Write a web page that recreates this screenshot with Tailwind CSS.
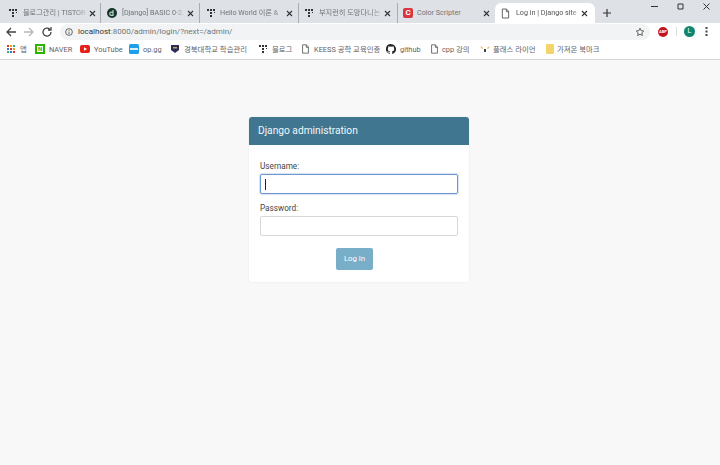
<!DOCTYPE html>
<html>
<head>
    <title>Log in | Django site admin</title>
    <meta charset="utf-8">
    <script src="https://cdn.jsdelivr.net/npm/@tailwindcss/browser@4"></script>
</head>
<body class="h-[465px] w-[720px] overflow-hidden flex flex-col bg-[#f8f8f8] font-['Roboto','Noto_Sans_CJK_KR',sans-serif]">
    <!-- tab strip -->
    <div class="h-[23px] bg-[#dee1e6] flex items-end pl-[4px] relative text-[7.2px] text-[#70757a] shrink-0">
        <div class="w-[97px] h-[20px] flex items-center pl-[4px] pr-[4px] border-r border-[#a9adb3]">
            <svg class="w-[10px] h-[10px] shrink-0" viewBox="0 0 10 10"><path fill="#333" d="M1 1h2v2H1zM4 1h2v2H4zM7 1h2v2H7zM4 4h2v2H4zM4 7h2v2H4zM8 4h1v1H8z"/></svg>
            <span class="ml-[5px] flex-1 whitespace-nowrap [mask-image:linear-gradient(to_right,#000_80%,transparent)]">블로그관리 | TISTOR</span>
            <svg class="w-[7px] h-[7px] shrink-0" viewBox="0 0 7 7"><path stroke="#333" stroke-width="1.1" d="M1 1l5 5M6 1L1 6"/></svg>
        </div>
        <div class="w-[99px] h-[20px] flex items-center pl-[6px] pr-[5px] border-r border-[#a9adb3]">
            <svg class="w-[10px] h-[10px] shrink-0" viewBox="0 0 10 10"><circle cx="5" cy="5" r="5" fill="#17352a"/><path fill="none" stroke="#b9d8c8" stroke-width="1.2" d="M6 2v5.4H4.4a1.6 1.6 0 0 1 0-3.2H6"/></svg>
            <span class="ml-[5px] flex-1 whitespace-nowrap [mask-image:linear-gradient(to_right,#000_80%,transparent)]">[Django] BASIC 0-2.</span>
            <svg class="w-[7px] h-[7px] shrink-0" viewBox="0 0 7 7"><path stroke="#333" stroke-width="1.1" d="M1 1l5 5M6 1L1 6"/></svg>
        </div>
        <div class="w-[99px] h-[20px] flex items-center pl-[6px] pr-[5px] border-r border-[#a9adb3]">
            <svg class="w-[10px] h-[10px] shrink-0" viewBox="0 0 10 10"><path fill="#333" d="M1 1h2v2H1zM4 1h2v2H4zM7 1h2v2H7zM4 4h2v2H4zM4 7h2v2H4zM8 4h1v1H8z"/></svg>
            <span class="ml-[4px] flex-1 whitespace-nowrap [mask-image:linear-gradient(to_right,#000_80%,transparent)]">Hello World 이론 &amp;</span>
            <svg class="w-[7px] h-[7px] shrink-0" viewBox="0 0 7 7"><path stroke="#333" stroke-width="1.1" d="M1 1l5 5M6 1L1 6"/></svg>
        </div>
        <div class="w-[99px] h-[20px] flex items-center pl-[5px] pr-[6px] border-r border-[#a9adb3]">
            <svg class="w-[10px] h-[10px] shrink-0" viewBox="0 0 10 10"><path fill="#333" d="M1 1h2v2H1zM4 1h2v2H4zM7 1h2v2H7zM4 4h2v2H4zM4 7h2v2H4zM8 4h1v1H8z"/></svg>
            <span class="ml-[5px] flex-1 whitespace-nowrap [mask-image:linear-gradient(to_right,#000_80%,transparent)]">부지런히 도망다니는</span>
            <svg class="w-[7px] h-[7px] shrink-0" viewBox="0 0 7 7"><path stroke="#333" stroke-width="1.1" d="M1 1l5 5M6 1L1 6"/></svg>
        </div>
        <div class="w-[97px] h-[20px] flex items-center pl-[5px] pr-[5px]">
            <span class="w-[10px] h-[10px] rounded-[2px] bg-[#d9363e] text-white text-[8px] leading-[10px] text-center font-bold shrink-0">C</span>
            <span class="ml-[4px] flex-1 whitespace-nowrap">Color Scripter</span>
            <svg class="w-[7px] h-[7px] shrink-0" viewBox="0 0 7 7"><path stroke="#333" stroke-width="1.1" d="M1 1l5 5M6 1L1 6"/></svg>
        </div>
        <div class="w-[100px] h-[20px] flex items-center pl-[6px] pr-[7px] bg-white rounded-t-[6px] text-[#555]">
            <svg class="w-[9px] h-[11px] shrink-0" viewBox="0 0 10 12" fill="none" stroke="#555"><path d="M1.5 1h4.5l2.5 2.5V11h-7zM6 1v3h2.5"/></svg>
            <span class="ml-[6px] flex-1 whitespace-nowrap [mask-image:linear-gradient(to_right,#000_85%,transparent)]">Log in | Django site</span>
            <svg class="w-[7px] h-[7px] shrink-0" viewBox="0 0 7 7"><path stroke="#333" stroke-width="1.1" d="M1 1l5 5M6 1L1 6"/></svg>
        </div>
        <svg class="ml-[8px] mb-[6px] w-[8px] h-[8px]" viewBox="0 0 8 8"><path stroke="#333" stroke-width="1.2" d="M4 0v8M0 4h8"/></svg>
        <!-- window buttons -->
        <div class="absolute right-[10px] top-[3px] flex gap-[19px]">
            <svg class="w-[7px] h-[7px]" viewBox="0 0 7 7"><path stroke="#333" d="M0 3.5h7"/></svg>
            <svg class="w-[7px] h-[7px]" viewBox="0 0 7 7" fill="none"><path stroke="#333" d="M1 1h5v5H1z"/></svg>
            <svg class="w-[7px] h-[7px]" viewBox="0 0 7 7"><path stroke="#333" d="M.5.5l6 6M6.5.5l-6 6"/></svg>
        </div>
    </div>
    <!-- toolbar -->
    <div class="h-[17px] bg-white flex items-center shrink-0">
        <svg class="ml-[5px] w-[12px] h-[12px]" viewBox="0 0 12 12" fill="none" stroke="#444" stroke-width="1.3"><path d="M11 6H2M6 2L2 6l4 4"/></svg>
        <svg class="ml-[6px] w-[12px] h-[12px]" viewBox="0 0 12 12" fill="none" stroke="#b5b7ba" stroke-width="1.3"><path d="M1 6h9M6 2l4 4-4 4"/></svg>
        <svg class="ml-[6px] w-[12px] h-[12px]" viewBox="0 0 12 12" fill="none" stroke="#444" stroke-width="1.3"><path d="M10 6a4 4 0 1 1-1.2-2.8M10 1v3H7"/></svg>
        <div class="ml-[7px] w-[590px] h-[16px] mt-[1px] rounded-full bg-[#f1f3f4] flex items-center pl-[5px] pr-[5px] text-[8px]">
            <svg class="w-[8px] h-[8px] shrink-0" viewBox="0 0 10 10" fill="none" stroke="#444"><circle cx="5" cy="5" r="4.2"/><path d="M5 4.5v3M5 2.5v1"/></svg>
            <span class="ml-[5px] text-[#333]">localhost</span><span class="text-[#70757a]">:8000/admin/login/?next=/admin/</span>
            <svg class="ml-auto w-[10px] h-[10px]" viewBox="0 0 24 24" fill="none" stroke="#444" stroke-width="2"><path d="M12 3l2.8 5.8 6.2.9-4.5 4.4 1.1 6.3-5.6-3-5.6 3 1.1-6.3L3 9.7l6.2-.9z"/></svg>
        </div>
        <span class="ml-[8px] w-[10px] h-[10px] rounded-full bg-[#c4131c] text-white text-[4px] leading-[10px] text-center font-bold">ABP</span>
        <span class="ml-[8px] w-px h-[9px] bg-[#dadce0]"></span>
        <span class="ml-[7px] w-[11px] h-[11px] rounded-full bg-[#0f8571] text-white text-[7px] leading-[11px] text-center">L</span>
        <svg class="ml-[10px] w-[3px] h-[9px]" viewBox="0 0 3 9"><path fill="#444" d="M.5 0h2v2h-2zM.5 3.5h2v2h-2zM.5 7h2v2h-2z"/></svg>
    </div>
    <!-- bookmarks -->
    <div class="h-[20px] bg-white border-b border-[#d2d4d7] flex items-center pl-[7px] text-[7.4px] text-[#5f6368] whitespace-nowrap shrink-0">
        <div class="w-[28px] flex items-center">
            <svg class="w-[8px] h-[8px] shrink-0" viewBox="0 0 8 8"><path fill="#d33" d="M0 0h2v2H0z"/><path fill="#e8a010" d="M3 0h2v2H3z"/><path fill="#3a7" d="M6 0h2v2H6z"/><path fill="#37c" d="M0 3h2v2H0z"/><path fill="#d33" d="M3 3h2v2H3z"/><path fill="#e8a010" d="M6 3h2v2H6z"/><path fill="#3a7" d="M0 6h2v2H0z"/><path fill="#37c" d="M3 6h2v2H3z"/><path fill="#d33" d="M6 6h2v2H6z"/></svg>
            <span class="ml-[5px]">앱</span>
        </div>
        <div class="w-[45px] flex items-center">
            <span class="w-[10px] h-[10px] bg-[#2db400] flex items-center justify-center shrink-0"><span class="w-[6px] h-[6px] bg-white text-[#2db400] text-[6px] leading-[6px] text-center font-bold">N</span></span>
            <span class="ml-[4px]">NAVER</span>
        </div>
        <div class="w-[49px] flex items-center">
            <svg class="w-[10px] h-[8px] shrink-0" viewBox="0 0 10 8"><rect width="10" height="8" rx="2" fill="#e62117"/><path fill="#fff" d="M4 2.2v3.6L7 4z"/></svg>
            <span class="ml-[4px]">YouTube</span>
        </div>
        <div class="w-[41px] flex items-center">
            <svg class="w-[10px] h-[10px] shrink-0" viewBox="0 0 10 10"><rect width="10" height="10" rx="1.5" fill="#1e9fe8"/><path fill="#d6efff" d="M1 4h8v2H1z"/></svg>
            <span class="ml-[4px]">op.gg</span>
        </div>
        <div class="w-[88px] flex items-center">
            <svg class="w-[10px] h-[10px] shrink-0" viewBox="0 0 10 10"><path fill="#2b2b5e" d="M1 1h8v5L5 9 1 6z"/><path fill="#c9a24a" d="M3 3h4v1.500H3z"/></svg>
            <span class="ml-[4px]">경북대학교 학습관리</span>
        </div>
        <div class="w-[43px] flex items-center">
            <svg class="w-[10px] h-[10px] shrink-0" viewBox="0 0 10 10"><path fill="#333" d="M1 1h2v2H1zM4 1h2v2H4zM7 1h2v2H7zM4 4h2v2H4zM4 7h2v2H4zM8 4h1v1H8z"/></svg>
            <span class="ml-[4px]">블로그</span>
        </div>
        <div class="w-[85px] flex items-center">
            <svg class="w-[9px] h-[10px] shrink-0" viewBox="0 0 10 12" fill="none" stroke="#555"><path d="M1.5 1h4.500l2.500 2.500V11h-7zM6 1v3h2.500"/></svg>
            <span class="ml-[4px]">KEESS 공학 교육인증</span>
        </div>
        <div class="w-[44px] flex items-center">
            <svg class="w-[10px] h-[10px] shrink-0" viewBox="0 0 24 24"><path fill="#222" d="M12 .3a12 12 0 0 0-3.800 23.400c.6.100.8-.3.800-.6v-2c-3.300.7-4-1.600-4-1.600-.5-1.400-1.300-1.800-1.300-1.800-1.100-.7.100-.7.100-.7 1.200.1 1.800 1.200 1.800 1.200 1.100 1.800 2.800 1.300 3.500 1 .1-.8.400-1.300.8-1.600-2.700-.3-5.500-1.300-5.500-5.900 0-1.300.5-2.400 1.200-3.200-.1-.3-.5-1.500.1-3.200 0 0 1-.3 3.300 1.200a11.500 11.500 0 0 1 6 0c2.300-1.500 3.300-1.200 3.300-1.200.6 1.700.2 2.900.1 3.200.8.800 1.200 1.900 1.200 3.200 0 4.600-2.800 5.600-5.500 5.900.4.400.8 1.100.8 2.200v3.300c0 .3.200.7.800.6A12 12 0 0 0 12 .3"/></svg>
            <span class="ml-[4px]">github</span>
        </div>
        <div class="w-[50px] flex items-center">
            <svg class="w-[9px] h-[10px] shrink-0" viewBox="0 0 10 12" fill="none" stroke="#555"><path d="M1.5 1h4.500l2.500 2.500V11h-7zM6 1v3h2.500"/></svg>
            <span class="ml-[3px]">cpp 강의</span>
        </div>
        <div class="w-[66px] flex items-center">
            <svg class="w-[10px] h-[8px] shrink-0" viewBox="0 0 10 8"><path fill="#e8a33a" d="M0 1l3 2-1 1zM10 1L7 3l1 1z"/><path fill="#444" d="M4 4h2v3H4z"/></svg>
            <span class="ml-[3px]">플래스 라이언</span>
        </div>
        <div class="flex items-center">
            <span class="w-[8px] h-[10px] rounded-[1px] bg-[#f5d46a] shrink-0"></span>
            <span class="ml-[3px]">가져온 북마크</span>
        </div>
    </div>
    <!-- login card -->
    <main class="flex-1 flex justify-center pt-[57px] pr-[2px]">
        <div class="w-[220px] h-[165px] bg-white rounded-[3px] shadow-[0_0_2px_rgba(0,0,0,0.08)] overflow-hidden">
            <div class="h-[28px] bg-[#417690] flex items-center pl-[9px] text-[10.2px] text-[#f0f8fb]">Django administration</div>
            <form class="pt-[16px] px-[11px] text-[8.200px] text-[#444]">
                <label class="block leading-[11px] mb-[2px]">Username:</label>
                <div class="h-[20px] rounded-[2px] border border-[#6f97cf] shadow-[0_0_1px_1px_rgba(120,160,220,0.3)] bg-white flex items-center pl-[4px] mb-[9px]">
                    <span class="w-px h-[11px] bg-[#222]"></span>
                </div>
                <label class="block leading-[11px] mb-[2px]">Password:</label>
                <div class="h-[20px] rounded-[2px] border border-[#d8d8d8] bg-white mb-[12px]"></div>
                <div class="flex justify-center pr-[9px]">
                    <span class="w-[37px] h-[22px] rounded-[2px] bg-[#79aec8] text-white text-[7.8px] flex items-center justify-center">Log in</span>
                </div>
            </form>
        </div>
    </main>
</body>
</html>
